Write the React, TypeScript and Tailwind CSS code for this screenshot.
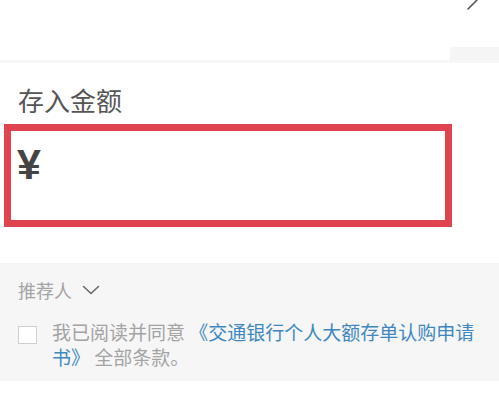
export default function App() {
  return (
    <div className="relative w-[499px] h-[412px] overflow-hidden bg-white font-['Noto_Sans_CJK_SC','Noto_Sans',sans-serif]">
      {/* top row, cut off by the screenshot */}
      <div className="relative h-[60px]">
        <svg className="absolute right-[19px] top-[-11px]" width="14" height="22" viewBox="0 0 14 22" fill="none">
          <path d="M2 1 L11 11 L2 20" stroke="#555" strokeWidth="1.6" strokeLinecap="round" strokeLinejoin="round" />
        </svg>
        <div className="absolute right-0 bottom-0 w-[49px] h-[13px] bg-[#f5f5f5]" />
      </div>
      <div className="h-[3px] bg-[#f7f7f7]" />

      {/* amount */}
      <div className="pt-[23px]">
        <div className="pl-[18px] text-[26px] leading-[27px] text-[#555]">存入金额</div>
        <div className="mt-[11px] ml-[4px] w-[448px] h-[103px] border-[7px] border-[#e0454f] pl-[6px] pt-[12px]">
          <span className="font-['Liberation_Sans',sans-serif] font-bold text-[43px] leading-none text-[#444]">¥</span>
        </div>
      </div>

      {/* referrer + agreement */}
      <div className="mt-[36px] bg-[#f6f6f7] pt-[17px] pb-[12px]">
        <div className="flex items-center pl-[18px] gap-[10px]">
          <span className="text-[18px] leading-[20px] text-[#a3a3a3]">推荐人</span>
          <svg width="18" height="10" viewBox="0 0 18 10" fill="none">
            <path d="M1.5 1.5 L9 8.5 L16.5 1.5" stroke="#666" strokeWidth="1.5" strokeLinecap="round" strokeLinejoin="round" />
          </svg>
        </div>
        <div className="flex mt-[19px] pl-[18px] pr-[16px]">
          <div className="mt-[7px] w-[19px] h-[18px] shrink-0 border border-[#cfcfcf] bg-white" />
          <p className="ml-[15px] text-[19px] leading-[25px] text-[#a3a3a3]">
            我已阅读并同意 <span className="text-[#3e88bf]">《交通银行个人大额存单认购申请书》</span> 全部条款。
          </p>
        </div>
      </div>
    </div>
  )
}
